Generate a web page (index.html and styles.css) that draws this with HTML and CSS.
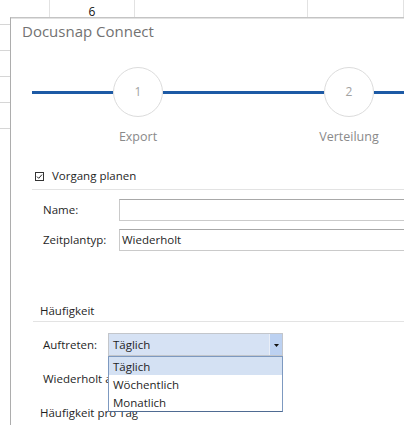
FILE: index.html
```html
<!DOCTYPE html>
<html lang="de">
<head>
<meta charset="utf-8">
<title>Docusnap Connect</title>
<link rel="stylesheet" href="styles.css">
</head>
<body>
  <!-- worksheet behind the dialog -->
  <div class="sheet">
    <div class="cell"></div><div class="cell"><span class="num">6</span></div><div class="cell"></div><div class="cell"></div>
    <div class="cell"></div><div class="cell"></div><div class="cell"></div><div class="cell"></div>
    <div class="cell"></div><div class="cell"></div><div class="cell"></div><div class="cell"></div>
    <div class="cell"></div><div class="cell"></div><div class="cell"></div><div class="cell"></div>
    <div class="cell"></div><div class="cell"></div><div class="cell"></div><div class="cell"></div>
  </div>

  <section class="dialog">
    <h1 class="title">Docusnap Connect</h1>

    <div class="stepper">
      <div class="track track-lead"></div>
      <div class="step">
        <div class="step-circle">1</div>
        <div class="step-label">Export</div>
      </div>
      <div class="track track-mid"></div>
      <div class="step">
        <div class="step-circle">2</div>
        <div class="step-label">Verteilung</div>
      </div>
      <div class="track track-tail"></div>
    </div>

    <div class="check-row">
      <svg class="check" width="9" height="9" viewBox="0 0 9 9">
        <rect x="0.5" y="0.5" width="8" height="8" fill="#fff" stroke="#333"/>
        <path d="M2 4.6 L3.7 6.3 L7 2.6" fill="none" stroke="#222" stroke-width="1"/>
      </svg>
      <span>Vorgang planen</span>
    </div>
    <div class="rule rule-top"></div>

    <div class="field-row first">
      <span class="field-label">Name:</span>
      <div class="textbox"></div>
    </div>
    <div class="field-row">
      <span class="field-label">Zeitplantyp:</span>
      <div class="textbox">Wiederholt</div>
    </div>

    <div class="group-title">Häufigkeit</div>
    <div class="rule rule-group"></div>

    <div class="field-row freq-row">
      <span class="field-label short">Auftreten:</span>
      <div class="combo">
        <span class="combo-value">Täglich</span>
        <span class="combo-btn">
          <svg width="5" height="3" viewBox="0 0 5 3"><polygon points="0,0 5,0 2.5,3" fill="#111"/></svg>
        </span>
        <ul class="combo-list">
          <li class="selected">Täglich</li>
          <li>Wöchentlich</li>
          <li>Monatlich</li>
        </ul>
      </div>
    </div>

    <div class="plain-label">Wiederholt alle:</div>
    <div class="sub-title">Häufigkeit pro Tag</div>
  </section>
</body>
</html>
```

FILE: styles.css
```css
html, body {
  margin: 0;
  padding: 0;
}

body {
  position: relative;
  width: 404px;
  height: 425px;
  overflow: hidden;
  background: #fff;
  font-family: "Open Sans", "Noto Sans", sans-serif;
  font-size: 11.5px;
  color: #1f1f1f;
}

/* worksheet grid */
.sheet {
  display: grid;
  grid-template-columns: 50px 85px 173px 1fr;
  grid-template-rows: 25px 26px 26px 26px 26px;
}

.cell {
  box-sizing: border-box;
  border-right: 1px solid #e2e2e2;
  border-bottom: 1px solid #d6d6d6;
}

.num {
  display: block;
  text-align: center;
  padding-top: 6px;
  font-size: 12px;
  line-height: 12px;
  color: #111;
}

/* dialog window */
.dialog {
  position: absolute;
  left: 10px;
  top: 17px;
  right: 0;
  bottom: 0;
  background: #fff;
  border-left: 1px solid #adadad;
  border-top: 1px solid #c4c4c4;
  box-shadow: inset 0 1px 0 #e2e2e2;
}

.title {
  margin: 0;
  padding: 2px 0 0 11px;
  font-size: 15px;
  line-height: 22px;
  font-weight: 400;
  color: #727272;
}

/* wizard steps */
.stepper {
  display: flex;
  margin-top: 25px;
  padding-left: 21px;
}

.track {
  height: 3px;
  margin-top: 24px;
  background: #1d5aa5;
  flex-shrink: 0;
}

.track-lead { width: 81px; }
.track-mid { width: 161px; }
.track-tail { flex: 1; }

.step {
  width: 50px;
  flex-shrink: 0;
  display: flex;
  flex-direction: column;
  align-items: center;
}

.step-circle {
  width: 50px;
  height: 50px;
  box-sizing: border-box;
  border: 1px solid #dcdcdc;
  border-radius: 50%;
  display: flex;
  align-items: center;
  justify-content: center;
  padding-bottom: 2px;
  font-size: 12px;
  color: #a2a2a2;
}

.step-label {
  margin-top: 11px;
  font-size: 12.5px;
  line-height: 18px;
  color: #8a8a8a;
  white-space: nowrap;
}

/* schedule checkbox */
.check-row {
  display: flex;
  align-items: center;
  margin-top: 21px;
  padding-left: 24px;
  line-height: 18px;
}

.check {
  margin-right: 8px;
  flex-shrink: 0;
}

.rule {
  height: 1px;
  background: #e3e3e3;
}

.rule-top { margin: 4px 0 0 21px; }
.rule-group { margin: 1px 0 0 22px; }

/* form rows */
.field-row {
  display: flex;
  align-items: center;
  padding-left: 32px;
  margin-top: 8px;
  line-height: 18px;
}

.field-row.first { margin-top: 9px; }

.field-label {
  width: 76px;
  flex-shrink: 0;
}

.field-label.short { width: 65px; }

.textbox {
  width: 320px;
  height: 22px;
  box-sizing: border-box;
  flex-shrink: 0;
  border: 1px solid #cacaca;
  border-top-color: #a8a8a8;
  padding: 1px 0 0 2px;
  line-height: 18px;
}

.group-title {
  margin-top: 51px;
  padding-left: 29px;
  line-height: 18px;
}

.freq-row { margin-top: 11px; }

/* combo box with open list */
.combo {
  position: relative;
  width: 175px;
  height: 23px;
  box-sizing: border-box;
  flex-shrink: 0;
  display: flex;
  align-items: center;
  border: 1px solid #c3c6cb;
  background: #d6e2f4;
}

.combo-value {
  flex: 1;
  padding-left: 4px;
  line-height: 18px;
}

.combo-btn {
  width: 13px;
  height: 21px;
  box-sizing: border-box;
  border-left: 1px solid #e9eef7;
  background: #bcd1f1;
  display: flex;
  align-items: center;
  justify-content: center;
  padding-top: 1px;
}

.combo-list {
  position: absolute;
  top: calc(100% + 1px);
  left: -1px;
  width: 175px;
  box-sizing: border-box;
  margin: 0;
  padding: 0;
  list-style: none;
  background: #fff;
  border: 1px solid #7d99c0;
  border-bottom-color: #4f6b92;
  z-index: 2;
}

.combo-list li {
  height: 18px;
  box-sizing: border-box;
  padding: 1px 0 0 4px;
  line-height: 17px;
}

.combo-list li.selected {
  background: #d4e1f3;
}

.plain-label {
  margin-top: 14px;
  padding-left: 32px;
  line-height: 18px;
}

.sub-title {
  margin-top: 16px;
  padding-left: 29px;
  line-height: 18px;
}
```
